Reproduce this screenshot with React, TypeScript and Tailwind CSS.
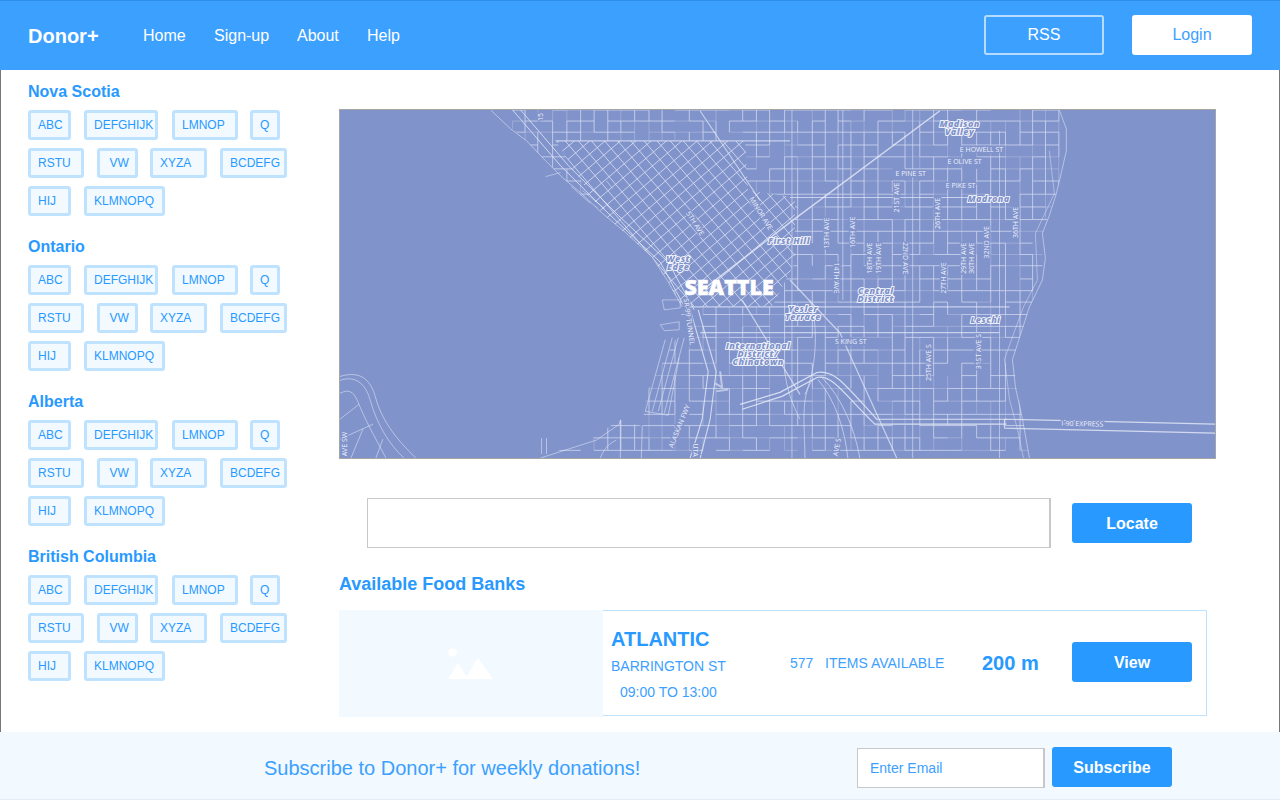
const font = { fontFamily: '"Liberation Sans", Arial, sans-serif' };

type Tag = { t: string; c: string };
const rows: Tag[][] = [
  [
    { t: "ABC", c: "w-[43px]" },
    { t: "DEFGHIJK", c: "ml-[13px] w-[74px]" },
    { t: "LMNOP", c: "ml-[14px] w-[66px]" },
    { t: "Q", c: "ml-[12px] w-[30px]" },
  ],
  [
    { t: "RSTU", c: "w-[56px]" },
    { t: "VW", c: "ml-[12.5px] w-[41px] pl-[10px]" },
    { t: "XYZA", c: "ml-[12.5px] w-[57px]" },
    { t: "BCDEFG", c: "ml-[13px] w-[67px]" },
  ],
  [
    { t: "HIJ", c: "w-[43px]" },
    { t: "KLMNOPQ", c: "ml-[13px] w-[80.5px]" },
  ],
];

function rng(seed: number) {
  let a = seed;
  return () => {
    a |= 0;
    a = (a + 0x6d2b79f5) | 0;
    let t = Math.imul(a ^ (a >>> 15), 1 | a);
    t = (t + Math.imul(t ^ (t >>> 7), 61 | t)) ^ t;
    return ((t ^ (t >>> 14)) >>> 0) / 4294967296;
  };
}

const f = (n: number) => n.toFixed(1);

function axisGrid() {
  const r = rng(7);
  const xs: number[] = [];
  const ys: number[] = [];
  let x = 512;
  while (x < 1070) {
    xs.push(x);
    x += 12.5 + r() * 2.5;
  }
  let y = 109;
  while (y < 462) {
    ys.push(y);
    y += 11 + r() * 2.5;
  }
  let solid = "";
  let faint = "";
  for (let i = 0; i < xs.length; i++) {
    for (let j = 0; j < ys.length - 1; j++) {
      const p = r();
      const s = `M${f(xs[i])} ${f(ys[j])}V${f(ys[j + 1])}`;
      if (p < 0.62) solid += s;
      else if (p < 0.85) faint += s;
    }
  }
  for (let j = 0; j < ys.length; j++) {
    for (let i = 0; i < xs.length - 1; i++) {
      const p = r();
      const s = `M${f(xs[i])} ${f(ys[j])}H${f(xs[i + 1])}`;
      if (p < 0.62) solid += s;
      else if (p < 0.85) faint += s;
    }
  }
  return { solid, faint };
}

function diagGrid() {
  let d = "";
  const dx = 0.76;
  const dy = 0.65;
  for (let k = -40; k < 50; k++) {
    const cx = 690 + k * 10 * dy;
    const cy = 225 + k * 10 * dx;
    d += `M${f(cx - dx * 220)} ${f(cy + dy * 220)}L${f(cx + dx * 220)} ${f(cy - dy * 220)}`;
    const ax = 690 + k * 10 * dx;
    const ay = 225 - k * 10 * dy;
    d += `M${f(ax - dy * 220)} ${f(ay - dx * 220)}L${f(ax + dy * 220)} ${f(ay + dx * 220)}`;
  }
  return d;
}

const land =
  "M490 109L526 140L562 177L602 213L652 257L682 307L679 333L646 393L642 427L619 420L596 437L539 459L1030 459L1023 420L1013 360L1030 307L1043 280L1043 233L1057 193L1067 150L1060 109Z";
const downtown = "M555 140L745 140L748 190L795 197L795 262L772 307L685 307L652 257L602 213Z";
const { solid, faint } = axisGrid();
const diag = diagGrid();

const vLabels: [string, number, number, number][] = [
  ["13TH AVE", 827, 233, -90],
  ["16TH AVE", 853, 232, -90],
  ["21ST AVE", 897, 197, -90],
  ["26TH AVE", 938, 213, -90],
  ["14TH AVE", 837, 278, 90],
  ["18TH AVE", 870, 258, -90],
  ["19TH AVE", 879, 258, -90],
  ["22ND AVE", 906, 258, 90],
  ["27TH AVE", 944, 278, -90],
  ["29TH AVE", 964, 258, -90],
  ["30TH AVE", 972, 258, -90],
  ["32ND AVE", 987, 242, -90],
  ["36TH AVE", 1016, 222, -90],
  ["25TH AVE S", 929, 363, -90],
  ["31ST AVE S", 979, 352, -90],
  ["E HOWELL ST", 982, 149, 0],
  ["E OLIVE ST", 965, 161, 0],
  ["E PINE ST", 911, 173, 0],
  ["E PIKE ST", 961, 185, 0],
  ["S KING ST", 851, 342, 0],
  ["I-90 EXPRESS", 1083, 424.5, 1],
  ["5TH AVE", 695, 223, 58],
  ["MINOR AVE", 761, 213, 58],
  ["SR-99 TUNNEL", 689, 322, 82],
  ["ALASKAN FWY", 679, 427, -68],
  ["UTA", 695, 451, 90],
  ["15", 540, 116, -90],
  ["AVE SW", 344, 445, -90],
  ["AVE S", 837, 448, -80],
];

const hoods: [string, number, number][] = [
  ["Madison", 960, 123],
  ["Valley", 960, 131],
  ["Madrona", 989, 198],
  ["First Hill", 789, 240],
  ["Central", 876, 291],
  ["District", 876, 298.5],
  ["Yesler", 803, 309],
  ["Terrace", 803, 317],
  ["Leschi", 986, 320],
  ["West", 678, 258],
  ["Edge", 678, 266],
  ["International", 758, 346],
  ["District/", 758, 354],
  ["Chinatown", 758, 362],
];

function SeattleMap() {
  return (
    <svg viewBox="339 109 877 350" preserveAspectRatio="none" className="block w-full h-full" role="img" aria-label="Map of Seattle">
      <defs>
        <clipPath id="axis">
          <path clipRule="evenodd" d={land + downtown} />
        </clipPath>
        <clipPath id="dt">
          <path d={downtown} />
        </clipPath>
        <filter id="soft" x="0" y="0" width="100%" height="100%">
          <feGaussianBlur stdDeviation="0.35" />
        </filter>
      </defs>
      <rect x="339" y="109" width="877" height="350" fill="#8193cb" />
      <g fill="none" stroke="#e6ebf8" strokeLinejoin="round" filter="url(#soft)">
        <g clipPath="url(#axis)">
          <path d={solid} strokeWidth="1" strokeOpacity="0.62" />
          <path d={faint} strokeWidth="1" strokeOpacity="0.26" />
        </g>
        <g clipPath="url(#dt)">
          <path d={diag} strokeWidth="1" strokeOpacity="0.72" />
        </g>
        {/* shorelines */}
        <path
          d="M490 109L510 128L526 140L545 160L562 177L580 192L602 213L625 232L652 257L668 282L682 307"
          strokeWidth="1"
          strokeOpacity="0.55"
        />
        <path
          d="M1060 109L1067 128L1067 150L1062 172L1057 193L1050 215L1043 233L1046 258L1043 280L1030 307L1022 332L1013 360L1016 388L1023 420L1030 459"
          strokeWidth="1"
          strokeOpacity="0.55"
        />
        <path
          d="M1050 150L1055 193L1036 233L1038 280L1024 307L1012 340L1005 360L1010 400L1018 430L1024 459"
          strokeWidth="1"
          strokeOpacity="0.45"
        />
        {/* major roads */}
        <path
          d="M512 109L560 165L610 215L660 262L686 310M520 109L568 165L618 215L668 262L694 310"
          strokeWidth="1"
          strokeOpacity="0.8"
        />
        <path d="M940 110L790 222L700 292" strokeWidth="1.5" strokeOpacity="0.8" />
        <path d="M555 140H790M686 307H1010M700 333H1000M790 197H1000" strokeWidth="1.2" strokeOpacity="0.7" />
        <path d="M792 109V459M843 109V300M913 109V459M1000 130V459" strokeWidth="1" strokeOpacity="0.55" />
        <path d="M790 280L840 333L897 459M700 110L760 200M742 300L800 395" strokeWidth="1.2" strokeOpacity="0.7" />
        <path d="M606 180L612 188M604 208L582 190M590 203L571 186M560 172L545 176" strokeWidth="1" strokeOpacity="0.5" />
        {/* I-5 and I-90 */}
        <path
          d="M740 405L780 393L817 373C835 370 845 385 877 420H1007M742 410L782 397L817 378C832 375 842 392 875 425H1007"
          strokeWidth="1.2"
          strokeOpacity="0.85"
        />
        <path d="M1005 420L1216 425M1005 429L1216 434M1005 420V429" strokeWidth="1.2" strokeOpacity="0.8" />
        <path d="M813 380C800 395 805 430 805 459M818 380C835 400 845 430 848 459M822 378C842 398 855 430 860 459" strokeWidth="1" strokeOpacity="0.6" />
        <path d="M810 300C820 330 815 375 805 395M784 360C785 385 790 400 800 420" strokeWidth="1" strokeOpacity="0.6" />
        {/* harbor */}
        <path
          d="M665 340L645 412L668 416L679 358M672 338L652 412M678 338L658 412M684 338L664 414"
          strokeWidth="1"
          strokeOpacity="0.55"
        />
        <path d="M660 325L679 322V330L664 331ZM662 300H680V308L664 310Z" strokeWidth="1" strokeOpacity="0.5" />
        <path
          d="M540 459L596 441L619 425L620 421V459M642 427L641 459M600 459C604 448 610 444 616 441M541 439V455M546 439V455"
          strokeWidth="1"
          strokeOpacity="0.55"
        />
        <path d="M690 310L708 372L702 420L690 459M698 310L716 372L710 420L700 459" strokeWidth="1.1" strokeOpacity="0.8" />
        <path d="M720 372L722 388L715 384M716 392L728 390" strokeWidth="2" strokeOpacity="0.6" />
        {/* west seattle */}
        <path
          d="M339 377C355 372 368 376 374 396C380 420 395 440 415 459M339 381C352 376 364 382 369 400C376 425 388 445 403 459M339 394C350 388 354 395 358 405C366 425 378 445 385 459M339 420L358 405M339 440L372 425M350 459L362 430M375 459L382 440"
          strokeWidth="1"
          strokeOpacity="0.55"
        />
      </g>
      <g fontFamily='"Open Sans", sans-serif' fontSize="7" fill="#eef1fb" textAnchor="middle">
        {vLabels.map(([t, x, y, r]) => (
          <text
            key={t}
            x={x}
            y={y}
            dominantBaseline="central"
            transform={`rotate(${r} ${x} ${y})`}
            stroke="#8193cb"
            strokeWidth="2.5"
            paintOrder="stroke"
          >
            {t}
          </text>
        ))}
      </g>
      <g fontFamily='"Open Sans", sans-serif' fontSize="9" fontWeight="800" fontStyle="italic" letterSpacing="0.4" textAnchor="middle">
        {hoods.map(([t, x, y]) => (
          <text
            key={t + x}
            x={x}
            y={y}
            dominantBaseline="central"
            fill="#8193cb"
            stroke="#ffffff"
            strokeWidth="1.7"
            paintOrder="stroke"
          >
            {t}
          </text>
        ))}
      </g>
      <text
        x="729"
        y="287"
        dominantBaseline="central"
        textAnchor="middle"
        fontFamily='"Open Sans", sans-serif'
        fontWeight="800"
        fontSize="21.5"
        fill="#ffffff"
        stroke="#ffffff"
        strokeWidth="0.5"
      >
        SEATTLE
      </text>
    </svg>
  );
}

function Province({ name }: { name: string }) {
  return (
    <section className="mb-[21px]">
      <h2 className="text-[16px] leading-[20px] font-bold text-[#2899ff]">{name}</h2>
      <div className="mt-[8px] flex flex-col gap-[8px]">
        {rows.map((row, i) => (
          <div key={i} className="flex">
            {row.map((tag) => (
              <span
                key={tag.t}
                className={`h-[30px] pl-[7px] flex items-center rounded-[3px] border-[3px] border-[#bfe3ff] bg-[#f2f9ff] text-[12px] text-[#2899ff] whitespace-nowrap overflow-visible ${tag.c}`}
              >
                {tag.t}
              </span>
            ))}
          </div>
        ))}
      </div>
    </section>
  );
}

export default function App() {
  return (
    <div className="w-[1280px] h-[802px] flex flex-col bg-white overflow-hidden" style={font}>
      <header className="h-[70px] shrink-0 flex items-center bg-[#3ca0ff] border-t border-[#2f8fe8] pl-[28px] pr-[28px] text-white">
        <span className="text-[20px] font-bold w-[115px]">Donor+</span>
        <nav className="flex text-[16px]">
          <a className="w-[71px]">Home</a>
          <a className="w-[83px]">Sign-up</a>
          <a className="w-[70px]">About</a>
          <a>Help</a>
        </nav>
        <button className="ml-auto mt-[-2px] pt-[1px] w-[120px] h-[40px] rounded-[3px] border-2 border-[#b5dcff] text-[16px] text-white">
          RSS
        </button>
        <button className="ml-[28px] mt-[-2px] pt-[1px] w-[120px] h-[40px] rounded-[3px] bg-white text-[16px] text-[#3ca0ff]">
          Login
        </button>
      </header>

      <div className="h-[662px] shrink-0 flex border-x border-[#777777]">
        <aside className="w-[338px] shrink-0 pl-[27px] pt-[12px]">
          <Province name="Nova Scotia" />
          <Province name="Ontario" />
          <Province name="Alberta" />
          <Province name="British Columbia" />
        </aside>

        <main className="flex-1 pt-[39px]">
          <div className="w-[877px] h-[350px] border border-[#a5a5a5] overflow-hidden">
            <SeattleMap />
          </div>

          <div className="mt-[39px] ml-[28px] flex items-center">
            <input
              aria-label="Location"
              className="w-[684px] h-[50px] bg-white border border-[#c8c8c8] border-r-2"
            />
            <button className="ml-[21px] w-[120px] h-[40px] pt-[1px] rounded-[3px] bg-[#2899ff] text-white font-bold text-[16px]">
              Locate
            </button>
          </div>

          <h2 className="mt-[25px] text-[18px] leading-[22px] font-bold text-[#2899ff]">Available Food Banks</h2>

          <article className="mt-[15px] w-[868px] h-[106px] flex items-center border border-[#bfe3ff] relative text-[#3ca0ff]">
            <div className="absolute left-[-1px] top-[-1px] w-[264px] h-[107px] bg-[#f2f9ff] flex items-center justify-center">
              <svg width="48" height="32" viewBox="0 0 48 32" fill="#ffffff" className="mt-[-2px]">
                <circle cx="5.7" cy="5.5" r="4.3" />
                <path d="M1 32L11 16L21 32Z" />
                <path d="M18 32L31 11L46 32Z" />
              </svg>
            </div>
            <div className="ml-[271px] w-[179px] flex flex-col shrink-0">
              <span className="text-[20px] leading-[24px] font-bold text-[#2899ff] mt-[1px]">ATLANTIC</span>
              <span className="text-[14px] leading-[18px] mt-[6px]">BARRINGTON ST</span>
              <span className="text-[14px] leading-[18px] mt-[8px] ml-[9px]">09:00 TO 13:00</span>
            </div>
            <span className="text-[14px] w-[35px] shrink-0 mt-[1px]">577</span>
            <span className="text-[14px] w-[157px] shrink-0 mt-[1px]">ITEMS AVAILABLE</span>
            <span className="text-[20px] font-bold text-[#2899ff] w-[90px] shrink-0">200 m</span>
            <button className="mt-[-2px] pt-[1px] w-[120px] h-[40px] rounded-[3px] bg-[#2899ff] text-white font-bold text-[16px]">
              View
            </button>
          </article>
        </main>
      </div>

      <footer className="h-[68px] shrink-0 flex items-center bg-[#f2f9ff] border-b border-[#e2edf6] pl-[264px] pt-[5px]">
        <p className="w-[593px] text-[20px] text-[#3ca0ff]">Subscribe to Donor+ for weekly donations!</p>
        <div className="w-[188px] h-[40px] flex items-center bg-white border border-[#c8c8c8] border-r-2 pl-[12px] text-[14px] text-[#3ca0ff]">
          Enter Email
        </div>
        <button className="ml-[7px] mt-[-2px] pt-[1px] w-[120px] h-[40px] rounded-[3px] bg-[#2899ff] text-white font-bold text-[16px]">
          Subscribe
        </button>
      </footer>
    </div>
  );
}
